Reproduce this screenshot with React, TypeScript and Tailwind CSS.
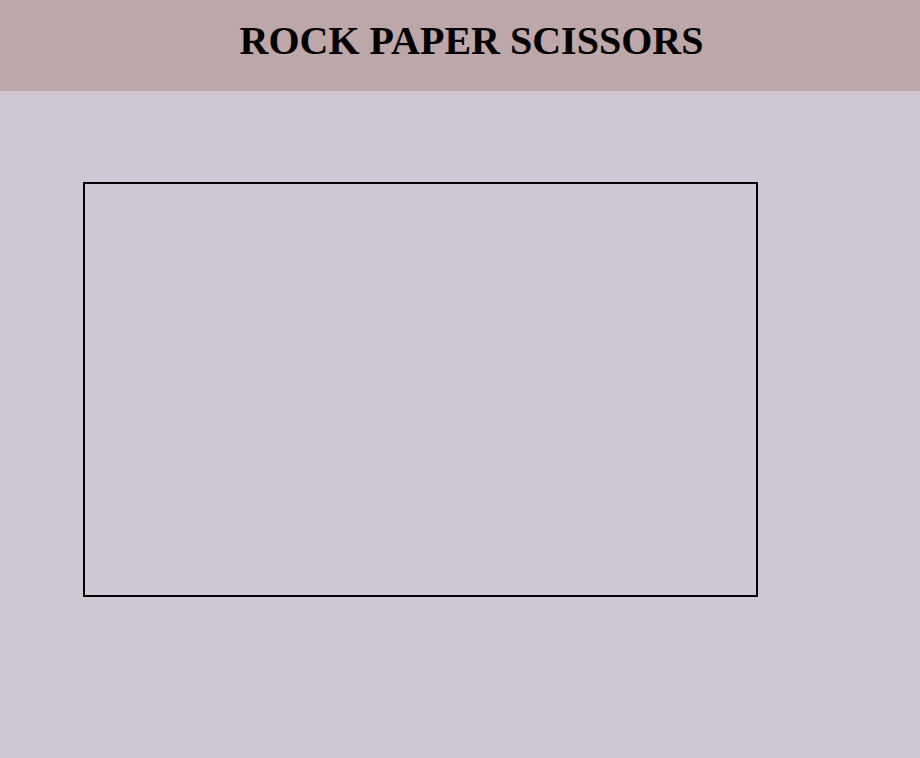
export default function App() {
  return (
    <div className="min-h-[758px] w-full flex flex-col bg-[#cfc7d3]" style={{ fontFamily: '"Liberation Serif", "Times New Roman", serif' }}>
      <header className="h-[91px] bg-[#bea7a8] flex items-center justify-center pl-[23px] pb-[10px]">
        <h1 className="text-[40px] font-bold text-black leading-none m-0">ROCK PAPER SCISSORS</h1>
      </header>
      <main className="flex-1 pt-[91px] pl-[83px]">
        <div className="w-[675px] h-[415px] border-2 border-black"></div>
      </main>
    </div>
  );
}
